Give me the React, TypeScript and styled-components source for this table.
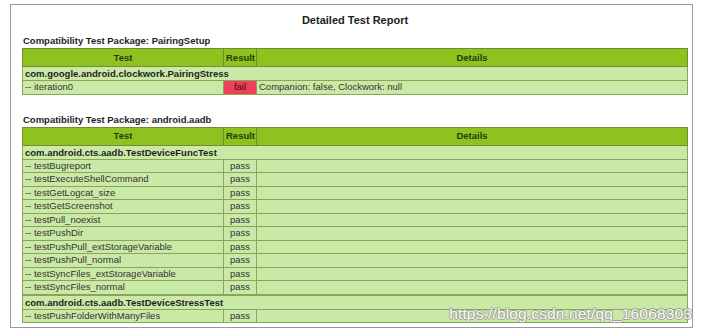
import React from "react"
import styled, { createGlobalStyle } from "styled-components"

const GlobalStyle = createGlobalStyle`
  body {
    margin: 0;
    background: #ffffff;
    font-family: "Liberation Sans", Arial, Helvetica, sans-serif;
  }
`

const Frame = styled.div`
  position: relative;
  margin: 4px 9px 0 10px;
  height: 322px;
  border: 1px solid #9a9a9a;
  overflow: hidden;
`

const Content = styled.div`
  padding: 0 4px 0 11px;
`

const Title = styled.h1`
  margin: 8px 0 0;
  font-size: 11px;
  line-height: 14px;
  font-weight: bold;
  text-align: center;
  color: #1c1c1c;
`

const Section = styled.section<{ $gap: number }>`
  margin-top: ${props => props.$gap}px;
`

const Caption = styled.div`
  font-size: 9.5px;
  line-height: 12px;
  font-weight: bold;
  color: #1e1e1e;
  padding-left: 1px;
  margin-bottom: 1px;
`

const Table = styled.table`
  width: 100%;
  border-collapse: collapse;
  table-layout: fixed;
  font-size: 9.5px;
  color: #2a2a2a;
  border: 1px solid #7d9c48;
`

const Th = styled.th<{ $width?: number }>`
  width: ${props => (props.$width ? `${props.$width}px` : "auto")};
  background: #8dc21f;
  border: 1px solid #6f8f2e;
  font-weight: bold;
  line-height: 12px;
  padding: 2.5px 2px;
  color: #2b3a12;
`

const PackageCell = styled.td`
  background: #cbe9a6;
  border: 1px solid #86a757;
  font-weight: bold;
  line-height: 13px;
  padding: 0 2px;
  color: #1e1e1e;
`

const Cell = styled.td<{ $center?: boolean; $fail?: boolean }>`
  background: ${props => (props.$fail ? "#ef3f5b" : "#cbe9a6")};
  border: 1px solid #86a757;
  line-height: 12.5px;
  padding: 0 2px;
  text-align: ${props => (props.$center ? "center" : "left")};
  white-space: nowrap;
  overflow: hidden;
  color: ${props => (props.$fail ? "#3a0a10" : "#333333")};
`

const Spacer = styled.td`
  background: #cbe9a6;
  border: 1px solid #86a757;
  height: 0;
  padding: 0;
  line-height: 0;
`

const Watermark = styled.div`
  position: absolute;
  right: 0;
  bottom: 4px;
  font-size: 15.5px;
  line-height: 18px;
  color: #ffffff;
  letter-spacing: 0.15px;
  text-shadow:
    1px 0 0 #9a9a9a,
    -1px 0 0 #9a9a9a,
    0 1px 0 #9a9a9a,
    0 -1px 0 #9a9a9a;
  opacity: 0.9;
`

interface TestRow {
  name: string
  result: "pass" | "fail"
  details?: string
}

interface TestCase {
  name: string
  tests: TestRow[]
}

interface TestPackage {
  name: string
  cases: TestCase[]
}

const packages: TestPackage[] = [
  {
    name: "PairingSetup",
    cases: [
      {
        name: "com.google.android.clockwork.PairingStress",
        tests: [{ name: "iteration0", result: "fail", details: "Companion: false, Clockwork: null" }],
      },
    ],
  },
  {
    name: "android.aadb",
    cases: [
      {
        name: "com.android.cts.aadb.TestDeviceFuncTest",
        tests: [
          "testBugreport",
          "testExecuteShellCommand",
          "testGetLogcat_size",
          "testGetScreenshot",
          "testPull_noexist",
          "testPushDir",
          "testPushPull_extStorageVariable",
          "testPushPull_normal",
          "testSyncFiles_extStorageVariable",
          "testSyncFiles_normal",
        ].map(name => ({ name, result: "pass" as const })),
      },
      {
        name: "com.android.cts.aadb.TestDeviceStressTest",
        tests: [{ name: "testPushFolderWithManyFiles", result: "pass" }],
      },
    ],
  },
]

const PackageTable: React.FC<{ pkg: TestPackage }> = ({ pkg }) => (
  <Table>
    <thead>
      <tr>
        <Th $width={196}>Test</Th>
        <Th $width={28}>Result</Th>
        <Th>Details</Th>
      </tr>
    </thead>
    <tbody>
      {pkg.cases.map((tc, i) => (
        <React.Fragment key={tc.name}>
          {i > 0 && (
            <tr>
              <Spacer colSpan={3} />
            </tr>
          )}
          <tr>
            <PackageCell colSpan={3}>{tc.name}</PackageCell>
          </tr>
          {tc.tests.map(t => (
            <tr key={t.name}>
              <Cell>-- {t.name}</Cell>
              <Cell $center $fail={t.result === "fail"}>
                {t.result}
              </Cell>
              <Cell>{t.details ?? ""}</Cell>
            </tr>
          ))}
        </React.Fragment>
      ))}
    </tbody>
  </Table>
)

const App: React.FC = () => (
  <>
    <GlobalStyle />
    <Frame>
      <Content>
        <Title>Detailed Test Report</Title>
        {packages.map((pkg, i) => (
          <Section key={pkg.name} $gap={i === 0 ? 8 : 19}>
            <Caption>Compatibility Test Package: {pkg.name}</Caption>
            <PackageTable pkg={pkg} />
          </Section>
        ))}
      </Content>
      <Watermark>https://blog.csdn.net/qq_16068303</Watermark>
    </Frame>
  </>
)

export default App
